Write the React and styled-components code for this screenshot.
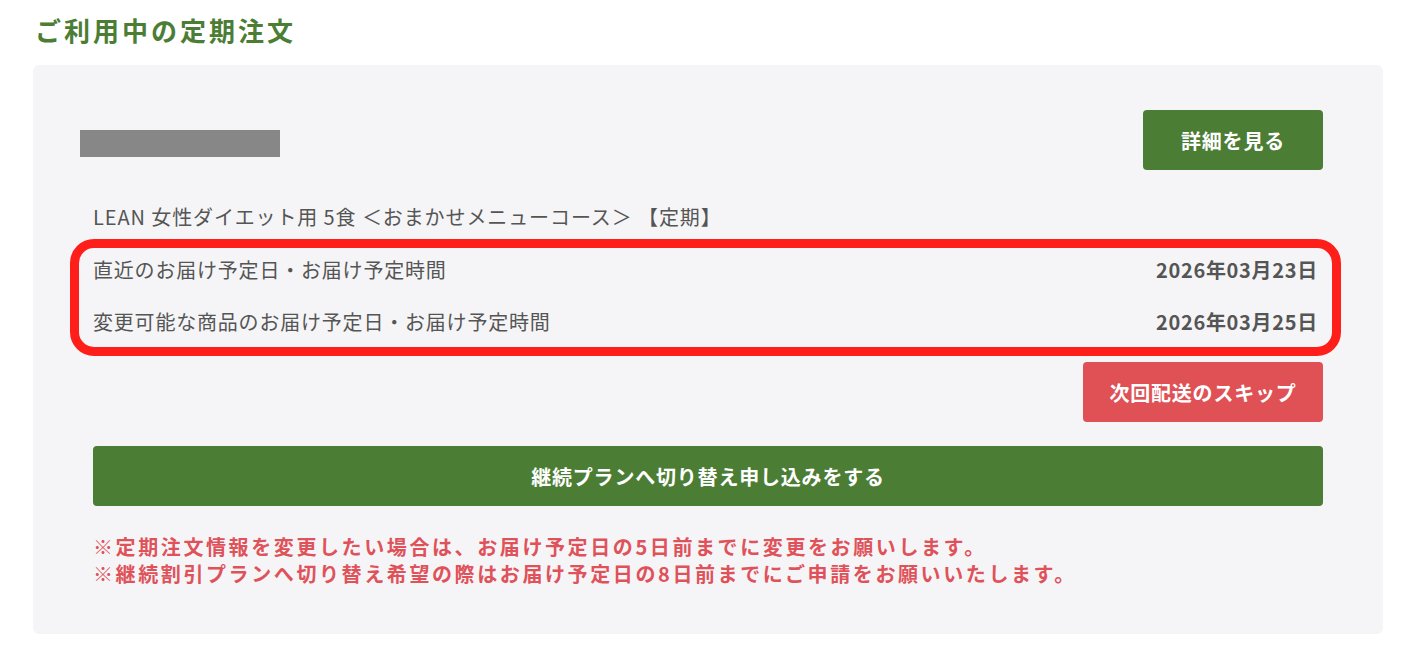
import React from 'react'
import styled, { createGlobalStyle } from 'styled-components'

const GlobalStyle = createGlobalStyle`
  body {
    margin: 0;
    background: #fff;
    font-family: "Noto Sans CJK JP", "Noto Sans", sans-serif;
  }
`

const Page = styled.div`
  padding: 12px 19px 19px 33px;
`

const Title = styled.h2`
  margin: 0 0 0 2px;
  font-size: 26px;
  line-height: 36px;
  font-weight: 700;
  letter-spacing: 3px;
  color: #4b7d35;
`

const Card = styled.div`
  margin-top: 17px;
  background: #f5f5f7;
  border-radius: 6px;
  padding: 45px 60px 47px 60px;
  color: #555;
`

const Header = styled.div`
  display: flex;
  justify-content: space-between;
  align-items: center;
`

const Redacted = styled.div`
  width: 200px;
  height: 27px;
  margin-left: -13px;
  margin-top: 7px;
  background: #878787;
`

const Button = styled.button`
  border: none;
  border-radius: 4px;
  height: 60px;
  width: ${p => p.$wide ? '100%' : `${p.$w || 180}px`};
  background: ${p => p.$danger ? '#e05156' : '#4b7d35'};
  color: #fff;
  font-family: inherit;
  font-size: 20px;
  font-weight: 700;
  letter-spacing: 0.8px;
  cursor: pointer;
`

const Product = styled.p`
  margin: 32px 0 0;
  font-size: 20px;
  line-height: 30px;
  letter-spacing: 0.9px;
`

const Schedule = styled.div`
  position: relative;
  margin-top: 23px;
  display: flex;
  flex-direction: column;
  gap: 22px;

  &::after {
    content: "";
    position: absolute;
    top: -16px;
    left: -23px;
    right: -18px;
    bottom: -19px;
    border: 9px solid #ff1f1a;
    border-radius: 24px;
    pointer-events: none;
  }
`

const Row = styled.div`
  display: flex;
  justify-content: space-between;
  align-items: center;
  font-size: 20px;
  line-height: 30px;
  letter-spacing: 0.8px;
`

const DateText = styled.span`
  font-weight: 700;
  letter-spacing: 0.7px;
  margin-right: 5px;
`

const SkipRow = styled.div`
  display: flex;
  justify-content: flex-end;
  margin-top: 25px;
`

const WideRow = styled.div`
  margin-top: 24px;
`

const Notes = styled.div`
  margin-top: 27px;
  color: #e0525a;
  font-size: 20px;
  line-height: 27px;
  font-weight: 700;
  letter-spacing: 2.6px;
`

const schedule = [
  { label: '直近のお届け予定日・お届け予定時間', date: '2026年03月23日' },
  { label: '変更可能な商品のお届け予定日・お届け予定時間', date: '2026年03月25日' },
]

export default function App() {
  return (
    <>
      <GlobalStyle />
      <Page>
        <Title>ご利用中の定期注文</Title>
        <Card>
          <Header>
            <Redacted />
            <Button>詳細を見る</Button>
          </Header>
          <Product>LEAN 女性ダイエット用 5食 ＜おまかせメニューコース＞ 【定期】</Product>
          <Schedule>
            {schedule.map(s => (
              <Row key={s.label}>
                <span>{s.label}</span>
                <DateText>{s.date}</DateText>
              </Row>
            ))}
          </Schedule>
          <SkipRow>
            <Button $danger $w={240}>次回配送のスキップ</Button>
          </SkipRow>
          <WideRow>
            <Button $wide>継続プランへ切り替え申し込みをする</Button>
          </WideRow>
          <Notes>
            <div>※定期注文情報を変更したい場合は、お届け予定日の5日前までに変更をお願いします。</div>
            <div>※継続割引プランへ切り替え希望の際はお届け予定日の8日前までにご申請をお願いいたします。</div>
          </Notes>
        </Card>
      </Page>
    </>
  )
}
